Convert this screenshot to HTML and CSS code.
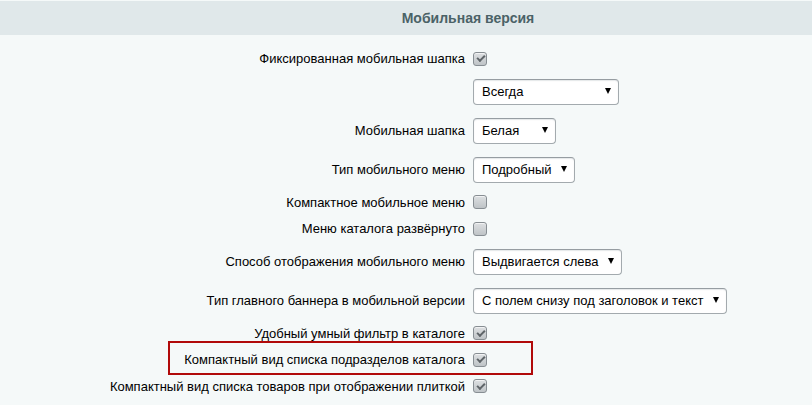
FILE: index.html
```html
<!DOCTYPE html>
<html lang="ru">
<head>
<meta charset="utf-8">
<title>Мобильная версия</title>
<link rel="stylesheet" href="styles.css">
</head>
<body>
<div class="panel">
  <div class="heading">Мобильная версия</div>
  <div class="rows">
    <div class="row">
      <div class="label">Фиксированная мобильная шапка</div>
      <div class="value"><span class="cb cb--on"></span></div>
    </div>
    <div class="row row--select">
      <div class="label"></div>
      <div class="value"><div class="select w-146"><span class="select-text">Всегда</span><span class="arrow"></span></div></div>
    </div>
    <div class="row row--select">
      <div class="label">Мобильная шапка</div>
      <div class="value"><div class="select w-83"><span class="select-text">Белая</span><span class="arrow"></span></div></div>
    </div>
    <div class="row row--select">
      <div class="label">Тип мобильного меню</div>
      <div class="value"><div class="select w-102"><span class="select-text">Подробный</span><span class="arrow"></span></div></div>
    </div>
    <div class="row">
      <div class="label">Компактное мобильное меню</div>
      <div class="value"><span class="cb"></span></div>
    </div>
    <div class="row">
      <div class="label">Меню каталога развёрнуто</div>
      <div class="value"><span class="cb"></span></div>
    </div>
    <div class="row row--select">
      <div class="label">Способ отображения мобильного меню</div>
      <div class="value"><div class="select w-149"><span class="select-text">Выдвигается слева</span><span class="arrow"></span></div></div>
    </div>
    <div class="row row--select">
      <div class="label">Тип главного баннера в мобильной версии</div>
      <div class="value"><div class="select w-254"><span class="select-text">С полем снизу под заголовок и текст</span><span class="arrow"></span></div></div>
    </div>
    <div class="row">
      <div class="label">Удобный умный фильтр в каталоге</div>
      <div class="value"><span class="cb cb--on"></span></div>
    </div>
    <div class="row row--marked">
      <div class="label">Компактный вид списка подразделов каталога</div>
      <div class="value"><span class="cb cb--on"></span></div>
      <div class="mark"></div>
    </div>
    <div class="row">
      <div class="label">Компактный вид списка товаров при отображении плиткой</div>
      <div class="value"><span class="cb cb--on"></span></div>
    </div>
  </div>
</div>
</body>
</html>
```

FILE: styles.css
```css
html, body {
  margin: 0;
  padding: 0;
}
body {
  background: #f5f9f9;
  font-family: "Liberation Sans", Arial, sans-serif;
  font-size: 13px;
  color: #000;
  overflow: hidden;
  width: 812px;
  height: 405px;
}
.panel {
  width: 812px;
  padding-top: 1px;
}
.heading {
  height: 34px;
  line-height: 34px;
  background: #e0e8ea;
  color: #4b6267;
  font-weight: bold;
  font-size: 14px;
  text-align: center;
  padding-left: 124px;
}
.rows {
  padding-top: 10.5px;
}
.row {
  display: grid;
  grid-template-columns: 465px 1fr;
  column-gap: 8px;
  align-items: center;
  height: 26.5px;
}
.row--select {
  height: 39px;
}
.row--marked {
  position: relative;
}
.label {
  text-align: right;
  white-space: nowrap;
  line-height: 15px;
}
.value {
  display: flex;
  align-items: center;
}
.cb {
  display: block;
  box-sizing: border-box;
  width: 14px;
  height: 14px;
  border: 1px solid #878e93;
  border-radius: 3px;
  background: linear-gradient(#dde0e2, #bfc4c7);
  box-shadow: inset 0 1px 0 rgba(255,255,255,.6);
  position: relative;
}
.cb--on::after {
  content: "";
  position: absolute;
  left: 2.5px;
  top: 2.5px;
  width: 6px;
  height: 3px;
  border-left: 2px solid #5f6569;
  border-bottom: 2px solid #5f6569;
  transform: rotate(-45deg);
}
.select {
  box-sizing: border-box;
  height: 26px;
  border: 1px solid #a3aaae;
  border-top-color: #969da2;
  border-radius: 4px;
  background: #fff;
  box-shadow: inset 0 1px 1px rgba(180,188,191,.35);
  display: flex;
  align-items: center;
  padding: 0 7px 0 8px;
}
.select-text {
  flex: 1;
  white-space: nowrap;
  line-height: 15px;
}
.arrow {
  width: 0;
  height: 0;
  border-left: 3px solid transparent;
  border-right: 3px solid transparent;
  border-top: 6px solid #000;
  margin-top: -2px;
}
.w-146 { width: 146px; }
.w-83 { width: 83px; }
.w-102 { width: 102px; }
.w-149 { width: 149px; }
.w-254 { width: 254px; }
.mark {
  position: absolute;
  left: 168px;
  top: -6px;
  width: 365px;
  height: 34px;
  box-sizing: border-box;
  border: 2px solid #b10a0a;
  pointer-events: none;
}
```
